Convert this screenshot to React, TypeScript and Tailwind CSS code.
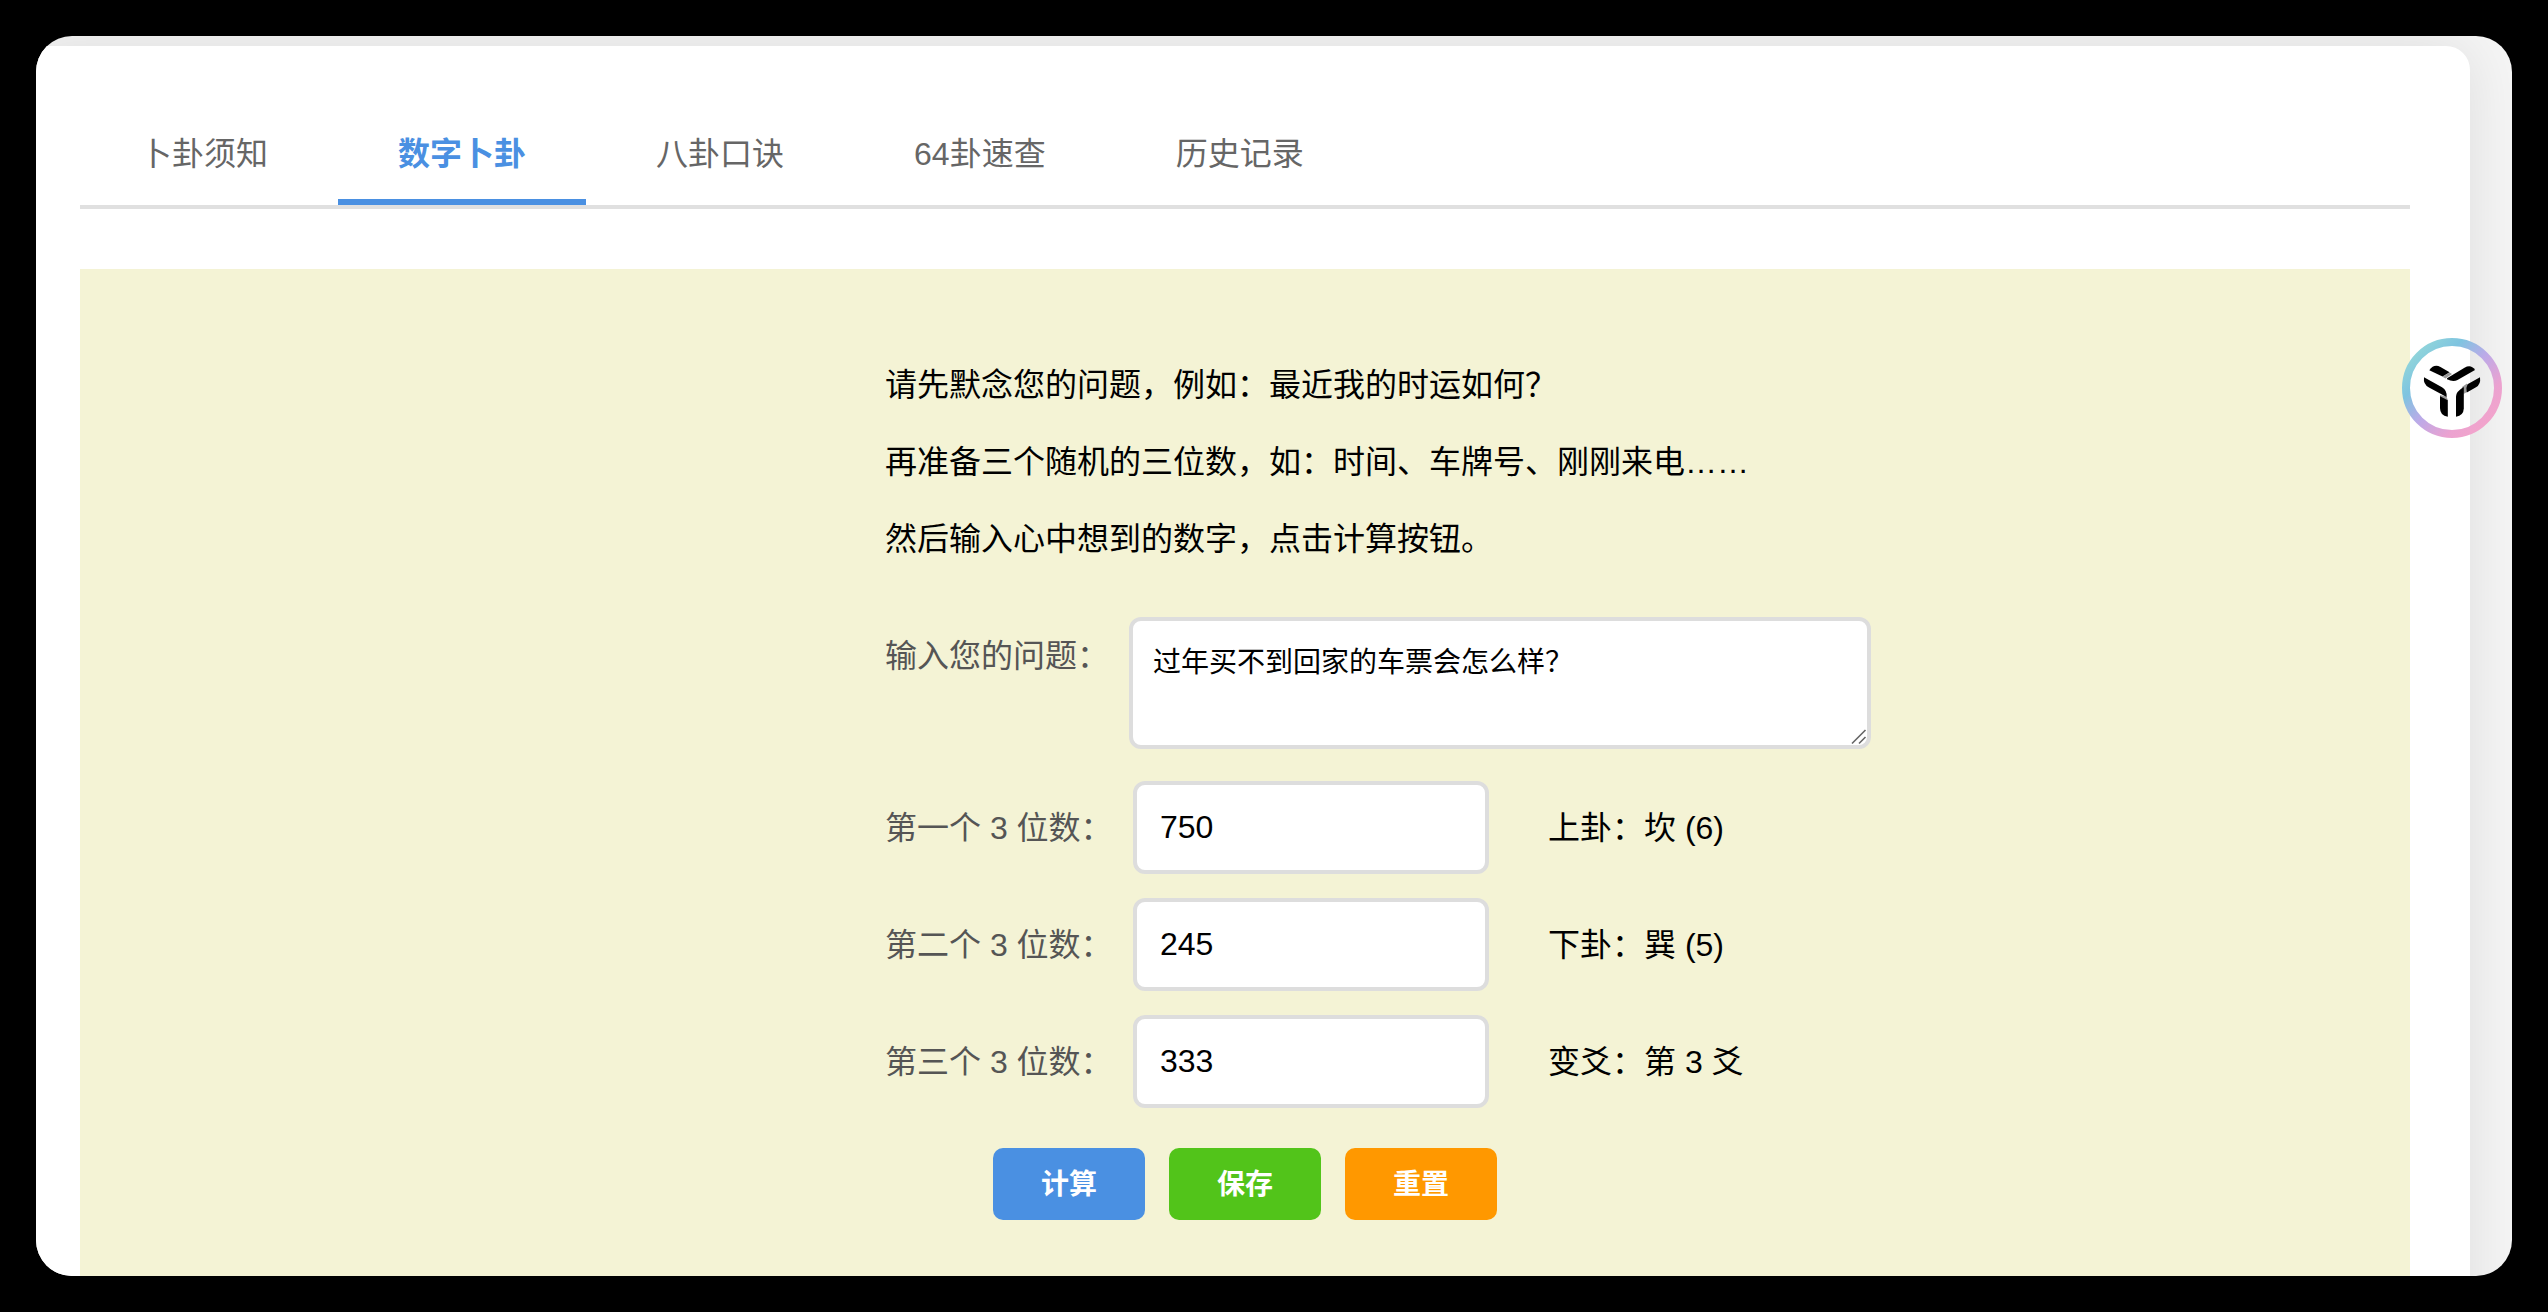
import { useState } from "react";
import { clsx } from "clsx";

const TABS = ["卜卦须知", "数字卜卦", "八卦口诀", "64卦速查", "历史记录"];

const INTRO = [
  "请先默念您的问题，例如：最近我的时运如何？",
  "再准备三个随机的三位数，如：时间、车牌号、刚刚来电……",
  "然后输入心中想到的数字，点击计算按钮。",
];

const ROWS = [
  { label: "第一个 3 位数：", value: "750", result: "上卦：坎 (6)" },
  { label: "第二个 3 位数：", value: "245", result: "下卦：巽 (5)" },
  { label: "第三个 3 位数：", value: "333", result: "变爻：第 3 爻" },
];

const BUTTONS = [
  { label: "计算", color: "bg-[#4a90e2]" },
  { label: "保存", color: "bg-[#52c41a]" },
  { label: "重置", color: "bg-[#ff9800]" },
];

function TabBar({ active, onChange }: { active: string; onChange: (tab: string) => void }) {
  return (
    <nav className="flex gap-[10px] border-b-4 border-[#e0e0e0]">
      {TABS.map((tab) => (
        <button
          key={tab}
          onClick={() => onChange(tab)}
          className={clsx(
            "h-[107px] border-b-[6px] px-[60px] pt-[10px] text-[32px] leading-[48px] whitespace-nowrap",
            tab === active
              ? "border-[#4a90e2] font-bold text-[#4a90e2]"
              : "border-transparent text-[#666]"
          )}
        >
          {tab}
        </button>
      ))}
    </nav>
  );
}

function QuestionRow() {
  return (
    <div className="mt-[39px] flex items-start">
      <label className="w-[244px] shrink-0 pt-[15px] leading-[48px] whitespace-nowrap text-[#555]">
        输入您的问题：
      </label>
      <div className="relative h-[132px] w-[742px]">
        <textarea
          defaultValue="过年买不到回家的车票会怎么样？"
          className="block size-full resize-none rounded-[12px] border-4 border-[#ddd] bg-white px-5 pt-[22px] text-[28px] leading-[40px] outline-none"
        />
        {/* Resize grip */}
        <svg className="absolute right-1 bottom-1 size-4" viewBox="0 0 16 16" stroke="#666" strokeWidth="1.6">
          <path d="M1 14.500L14.500 1M8 14.500L14.500 8" />
        </svg>
      </div>
    </div>
  );
}

function NumberRow({ label, value, result }: { label: string; value: string; result: string }) {
  return (
    <div className="flex h-[93px] items-center">
      <label className="w-[248px] shrink-0 whitespace-nowrap text-[#555]">{label}</label>
      <input
        defaultValue={value}
        className="h-[93px] w-[356px] shrink-0 rounded-[12px] border-4 border-[#ddd] bg-white px-[23px] text-[32px] outline-none"
      />
      <span className="ml-[59px] whitespace-nowrap">{result}</span>
    </div>
  );
}

/* Floating assistant button with a gradient ring */
function AssistantBadge() {
  return (
    <svg className="absolute top-[302px] left-[2366px] size-[100px]" viewBox="0 0 100 100" fill="none">
      <defs>
        <linearGradient id="ring" x1="12" y1="12" x2="88" y2="88" gradientUnits="userSpaceOnUse">
          <stop offset="0" stopColor="#92d6da" />
          <stop offset="0.25" stopColor="#7fc4e0" />
          <stop offset="0.5" stopColor="#bcaae8" />
          <stop offset="0.78" stopColor="#eba2d0" />
          <stop offset="1" stopColor="#f3a4cb" />
        </linearGradient>
      </defs>
      <circle cx="50" cy="50" r="46" stroke="url(#ring)" strokeWidth="8" />
      <g fill="#999">
        <path d="M40.500 38.800L47.500 34.500L50 36L43.500 40.500Z" />
        <path d="M60 49L65 45.500V54L61.500 56Z" />
        <path d="M38 57L44.500 58.500L46 62.500L38 59.500Z" />
      </g>
      <g fill="#000">
        <path d="M27.300 32.300Q32 25.500 38.500 29L47.500 34.300L40.500 38.500Z" />
        <path d="M45 40.200L62.500 29.800Q69 26 73 32L55.500 42Q51 44.300 45 41.200Z" />
        <path d="M22 39.300L40 49.300Q45.300 52.500 44.600 59L27 49.500Q21 46.500 22 39.300Z" />
        <path d="M78 39.300Q79 46.500 74 49.300L64.800 54.500Q63.500 50 65.500 46.200Z" />
        <path d="M38 58.300L45.800 62.300V78.700Q38 77.500 38 70Z" />
        <path d="M54 78.700V58.500Q54 53.500 61.800 49V70.500Q61.500 77.500 54 78.700Z" />
      </g>
    </svg>
  );
}

export default function App() {
  const [active, setActive] = useState("数字卜卦");

  return (
    <div className="h-[1312px] w-[2548px] overflow-hidden bg-black p-9 font-['Liberation_Sans','Noto_Sans_CJK_SC',sans-serif] text-[32px] text-black">
      <div className="relative h-[1240px] w-[2476px] overflow-hidden rounded-[36px] bg-[#f5f5f5] pt-[10px]">
        <main className="-ml-4 h-[1300px] w-[2450px] rounded-[24px] bg-white pt-[52px] pr-[60px] pl-[60px] shadow-[0_0_60px_rgba(0,0,0,0.1)]">
          <TabBar active={active} onChange={setActive} />

          <section className="mt-[60px] h-[1100px] bg-[#f4f3d5] pt-[78px] pl-[805px]">
            {INTRO.map((line) => (
              <p key={line} className="h-[77px] leading-[77px] whitespace-nowrap">
                {line}
              </p>
            ))}

            <QuestionRow />

            <div className="mt-8 flex flex-col gap-6">
              {ROWS.map((row) => (
                <NumberRow key={row.label} {...row} />
              ))}
            </div>

            <div className="mt-10 ml-[108px] flex gap-6">
              {BUTTONS.map(({ label, color }) => (
                <button
                  key={label}
                  className={clsx("h-[72px] w-[152px] rounded-[10px] pt-[2px] text-[28px] font-bold text-white", color)}
                >
                  {label}
                </button>
              ))}
            </div>
          </section>
        </main>

        <AssistantBadge />
      </div>
    </div>
  );
}
